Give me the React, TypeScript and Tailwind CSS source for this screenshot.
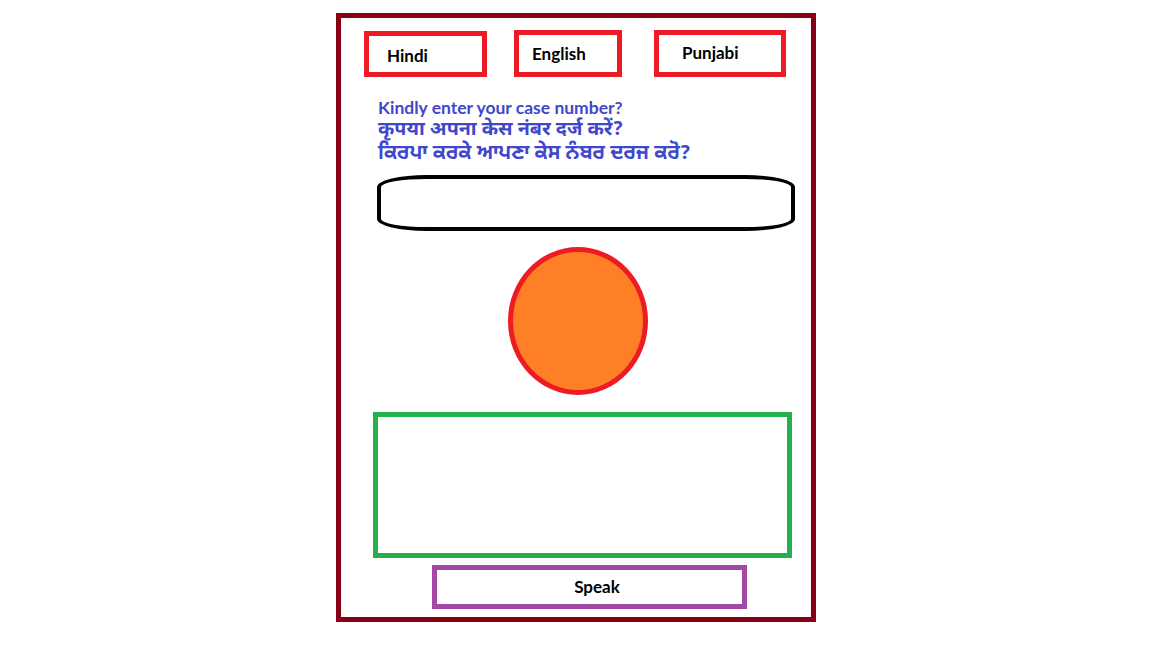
import React from "react";

const latin = { fontFamily: 'Lato, "Open Sans", "Noto Sans", sans-serif' };
const indic = {
  fontFamily:
    '"Nirmala UI", "Noto Sans Devanagari", "Noto Sans Gurmukhi", "Lohit Devanagari", "Lohit Gurmukhi", "Noto Sans", sans-serif',
};

export default function App() {
  return (
    <div className="w-[1152px] h-[648px] bg-white overflow-hidden">
      <div className="mx-auto mt-[13px] w-[480px] h-[609px] border-[5px] border-[#880015] flex flex-col items-start">
        {/* language row */}
        <div className="flex items-start pl-[23px]">
          <div
            className="mt-[13px] w-[123px] h-[46px] border-[5px] border-[#ED1C24] pl-[18px] pt-[10px] text-[17px] leading-[20px] font-bold text-black"
            style={latin}
          >
            Hindi
          </div>
          <div
            className="ml-[27px] mt-[12px] w-[108px] h-[47px] border-[5px] border-[#ED1C24] pl-[13px] pt-[9px] text-[17px] leading-[20px] font-bold text-black"
            style={latin}
          >
            English
          </div>
          <div
            className="ml-[32px] mt-[12px] w-[132px] h-[47px] border-[5px] border-[#ED1C24] pl-[23px] pt-[8px] text-[17px] leading-[20px] font-bold text-black"
            style={latin}
          >
            Punjabi
          </div>
        </div>

        {/* prompt text */}
        <div className="ml-[37px] h-[98px] pt-[19px] flex flex-col text-[#3F48CC] font-bold">
          <div className="text-[17.5px] leading-[23px]" style={latin}>
            Kindly enter your case number?
          </div>
          <div className="text-[19.7px] leading-[23px]" style={indic}>
            कृपया अपना केस नंबर दर्ज करें?
          </div>
          <div className="text-[20px] leading-[24px]" style={indic}>
            ਕਿਰਪਾ ਕਰਕੇ ਆਪਣਾ ਕੇਸ ਨੰਬਰ ਦਰਜ ਕਰੋ?
          </div>
        </div>

        {/* oval input */}
        <div className="ml-[36px] w-[418px] h-[56px] border-[4px] border-black rounded-[50px_/_12px]" />

        {/* mic circle */}
        <div className="ml-[167px] mt-[16px] w-[140px] h-[148px] rounded-[50%] border-[5px] border-[#ED1C24] bg-[#FF7F27]" />

        {/* result box */}
        <div className="ml-[32px] mt-[17px] w-[419px] h-[146px] border-[5px] border-[#22B14C]" />

        {/* speak button */}
        <div
          className="ml-[91px] mt-[7px] w-[315px] h-[44px] border-[5px] border-[#A349A4] flex items-center justify-center pl-[15px] text-[17px] font-bold text-black"
          style={latin}
        >
          Speak
        </div>
      </div>
    </div>
  );
}
